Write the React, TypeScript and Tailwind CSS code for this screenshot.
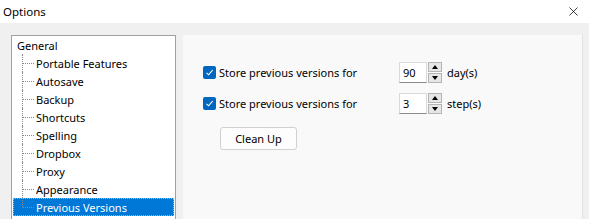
import { X } from 'lucide-react'

const font = { fontFamily: '"Noto Sans", "Liberation Sans", sans-serif' }

const children = [
  'Portable Features',
  'Autosave',
  'Backup',
  'Shortcuts',
  'Spelling',
  'Dropbox',
  'Proxy',
  'Appearance',
  'Previous Versions',
]

const Check = () => (
  <span className="flex h-[13px] w-[13px] items-center justify-center rounded-[2px] bg-[#0067c0]">
    <svg width="9" height="9" viewBox="0 0 9 9">
      <path d="M1.5 4.8 L3.6 6.8 L7.6 2.2" fill="none" stroke="#fff" strokeWidth="1.1" />
    </svg>
  </span>
)

const Spinner = () => (
  <div className="ml-[1px] flex flex-col gap-[1px]">
    <div className="flex h-[10px] w-[14px] items-center justify-center border border-[#b5b5b5] bg-[#e6e6e6]">
      <svg width="6" height="4" viewBox="0 0 6 4">
        <path d="M0 4 L3 0 L6 4 Z" fill="#000" />
      </svg>
    </div>
    <div className="flex h-[10px] w-[14px] items-center justify-center border border-[#b5b5b5] bg-[#e6e6e6]">
      <svg width="6" height="4" viewBox="0 0 6 4">
        <path d="M0 0 L3 4 L6 0 Z" fill="#000" />
      </svg>
    </div>
  </div>
)

const Row = ({ value, unit }: { value: string; unit: string }) => (
  <div className="flex h-[21px] items-center">
    <div className="flex w-[196px] items-center">
      <Check />
      <span className="ml-[3px] pt-[1px]">Store previous versions for</span>
    </div>
    <div className="flex h-[21px] w-[28px] items-center border border-[#d9d9d9] border-b-[#8a8a8a] bg-white pl-[3px] pt-[1px]">
      {value}
    </div>
    <Spinner />
    <span className="ml-[5px] pt-[1px]">{unit}</span>
  </div>
)

export default function App() {
  return (
    <div className="flex h-[219px] w-[589px] flex-col overflow-hidden bg-[#f0f0f0] text-[11px] text-black" style={font}>
      {/* title bar */}
      <div className="flex h-[23px] shrink-0 items-center justify-between bg-white pl-[3px] pr-[8px] text-[11.5px]">
        <span className="pt-[1px]">Options</span>
        <X size={15} strokeWidth={1.2} />
      </div>

      <div className="flex flex-1 gap-[7px] pl-[11px] pr-[6px] pt-[12px]">
        {/* tree */}
        <div className="h-[200px] w-[165px] shrink-0 border border-[#a0a0a0] bg-white px-[1px] leading-[18px]">
          <div className="h-[18px] pl-[4px] pt-[1px]">General</div>
          {children.map((c, i) => {
            const last = i === children.length - 1
            return (
              <div
                key={c}
                className={`flex h-[18px] items-center ${
                  last ? 'bg-[#0078d7] text-white outline outline-1 -outline-offset-1 outline-dotted outline-[#f5a15b]' : ''
                }`}
              >
                <div className="relative h-full w-[23px] shrink-0">
                  <div
                    className={`absolute left-[9px] top-0 w-0 border-l border-dotted border-[#8a8a8a] ${
                      last ? 'h-[9px]' : 'h-full'
                    }`}
                  />
                  <div className="absolute left-[10px] top-[9px] h-0 w-[11px] border-t border-dotted border-[#8a8a8a]" />
                </div>
                <span className="pt-[1px]">{c}</span>
              </div>
            )
          })}
        </div>

        {/* settings panel */}
        <div className="flex h-[200px] flex-1 flex-col border-r border-[#e2e2e2] bg-[#f9f9f9] pl-[20px] pt-[27px]">
          <Row value="90" unit="day(s)" />
          <div className="mt-[10px]">
            <Row value="3" unit="step(s)" />
          </div>
          <button className="ml-[17px] mt-[13px] h-[23px] w-[77px] rounded-[3px] border border-[#d0d0d0] bg-[#fdfdfd] pt-[1px]">
            Clean Up
          </button>
        </div>
      </div>
    </div>
  )
}
